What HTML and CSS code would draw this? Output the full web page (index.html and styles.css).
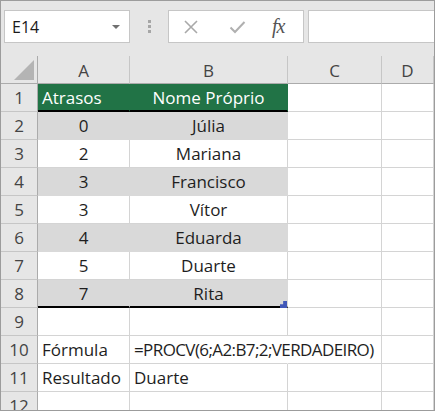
FILE: index.html
```html
<!DOCTYPE html>
<html lang="pt">
<head>
<meta charset="utf-8">
<link rel="stylesheet" href="styles.css">
</head>
<body>
<div class="app">
  <div class="toolbar">
    <div class="namebox"><span class="ref">E14</span><span class="caret"></span></div>
    <div class="dots"><i></i><i></i><i></i></div>
    <div class="fbuttons">
      <svg class="ic" width="16" height="16" viewBox="0 0 16 16"><path d="M2 2L14 14M14 2L2 14" stroke="#a9a9a9" stroke-width="1.6" fill="none"/></svg>
      <svg class="ic" width="17" height="16" viewBox="0 0 17 16"><path d="M1.5 8.5L6 13L15.5 3" stroke="#b0b0b0" stroke-width="2" fill="none"/></svg>
      <span class="fx">fx</span>
    </div>
    <div class="finput"></div>
  </div>
  <div class="sheet">
    <div class="corner"><span class="tri"></span></div>
    <div class="ch">A</div><div class="ch">B</div><div class="ch">C</div><div class="ch">D</div>

    <div class="rh">1</div><div class="c hd left">Atrasos</div><div class="c hd">Nome Próprio</div><div class="c"></div><div class="c"></div>
    <div class="rh">2</div><div class="c g">0</div><div class="c g">Júlia</div><div class="c"></div><div class="c"></div>
    <div class="rh">3</div><div class="c">2</div><div class="c">Mariana</div><div class="c"></div><div class="c"></div>
    <div class="rh">4</div><div class="c g">3</div><div class="c g">Francisco</div><div class="c"></div><div class="c"></div>
    <div class="rh">5</div><div class="c">3</div><div class="c">Vítor</div><div class="c"></div><div class="c"></div>
    <div class="rh">6</div><div class="c g">4</div><div class="c g">Eduarda</div><div class="c"></div><div class="c"></div>
    <div class="rh">7</div><div class="c">5</div><div class="c">Duarte</div><div class="c"></div><div class="c"></div>
    <div class="rh">8</div><div class="c g last">7</div><div class="c g last handle-cell">Rita<span class="handle"></span></div><div class="c"></div><div class="c"></div>
    <div class="rh">9</div><div class="c"></div><div class="c"></div><div class="c"></div><div class="c"></div>
    <div class="rh">10</div><div class="c left">Fórmula</div><div class="c left over">=PROCV(6;A2:B7;2;VERDADEIRO)</div><div class="c"></div><div class="c"></div>
    <div class="rh">11</div><div class="c left">Resultado</div><div class="c left">Duarte</div><div class="c"></div><div class="c"></div>
    <div class="rh">12</div><div class="c"></div><div class="c"></div><div class="c"></div><div class="c"></div>
  </div>
</div>
</body>
</html>
```

FILE: styles.css
```css
* { box-sizing: border-box; }
html, body { margin: 0; padding: 0; background: #fff; }
.app {
  width: 435px;
  height: 411px;
  border: 1px solid #9c9c9c;
  overflow: hidden;
  background: #fff;
  font-family: "Open Sans", "Noto Sans", sans-serif;
  color: #222;
}
.toolbar {
  height: 55px;
  background: #e6e6e6;
  display: flex;
  align-items: flex-start;
  padding: 9px 0 0 3px;
}
.namebox {
  width: 126px;
  height: 33px;
  background: #fff;
  border: 1px solid #c6c6c6;
  display: flex;
  align-items: center;
  justify-content: space-between;
  padding: 0 9px 0 7px;
  font-size: 16px;
  color: #1a1a1a;
}
.caret {
  width: 0; height: 0;
  border-left: 4px solid transparent;
  border-right: 4px solid transparent;
  border-top: 4px solid #707070;
}
.dots {
  width: 38px;
  height: 33px;
  display: flex;
  flex-direction: column;
  align-items: center;
  justify-content: center;
  gap: 2px;
}
.dots i { display: block; width: 3px; height: 3px; background: #a6a6a6; }
.fbuttons {
  width: 136px;
  height: 33px;
  background: #fff;
  border: 1px solid #c6c6c6;
  display: flex;
  align-items: center;
  padding-left: 14px;
  gap: 30px;
}
.ic { display: block; }
.fx {
  font-family: "Liberation Serif", "DejaVu Serif", serif;
  font-style: italic;
  font-size: 20px;
  color: #555;
  margin-left: -4px;
  letter-spacing: -1px;
}
.finput {
  flex: 1;
  height: 33px;
  margin-left: 4px;
  background: #fff;
  border: 1px solid #c6c6c6;
  border-right: none;
}
.sheet {
  display: grid;
  grid-template-columns: 37px 92px 158px 94px 1fr;
  grid-auto-rows: 28px;
}
.corner, .ch, .rh {
  background: #e6e6e6;
  color: #444;
  font-size: 17px;
  display: flex;
  align-items: center;
  justify-content: center;
}
.corner {
  border-right: 1px solid #ababab;
  border-bottom: 1px solid #ababab;
  position: relative;
}
.tri {
  position: absolute;
  right: 3px;
  bottom: 3px;
  width: 0; height: 0;
  border-left: 20px solid transparent;
  border-bottom: 20px solid #b4b4b4;
}
.ch {
  border-right: 1px solid #c6c6c6;
  border-bottom: 1px solid #ababab;
  padding-top: 1px;
}
.rh {
  border-right: 1px solid #ababab;
  border-bottom: 1px solid #c6c6c6;
}
.c {
  border-right: 1px solid #d4d4d4;
  border-bottom: 1px solid #d4d4d4;
  font-size: 17px;
  color: #1e1e1e;
  display: flex;
  align-items: center;
  justify-content: center;
  white-space: nowrap;
}
.c.left { justify-content: flex-start; padding-left: 4px; }
.c.hd {
  background: #217346;
  color: #fff;
  border-right-color: #217346;
  border-bottom: 2px solid #000;
}
.c.g {
  background: #d9d9d9;
  border-right-color: #d9d9d9;
  border-bottom-color: #d9d9d9;
}
.c.last { border-bottom: 2px solid #000; }
.c.over {
  border-right-color: transparent;
  overflow: visible;
  position: relative;
  z-index: 1;
  letter-spacing: -0.6px;
}
.handle-cell { position: relative; }
.handle {
  position: absolute;
  right: 0;
  bottom: -2px;
  width: 7px;
  height: 7px;
  background: #4057b8;
  clip-path: polygon(45% 0, 100% 0, 100% 100%, 0 100%, 0 45%, 45% 45%);
}
```
